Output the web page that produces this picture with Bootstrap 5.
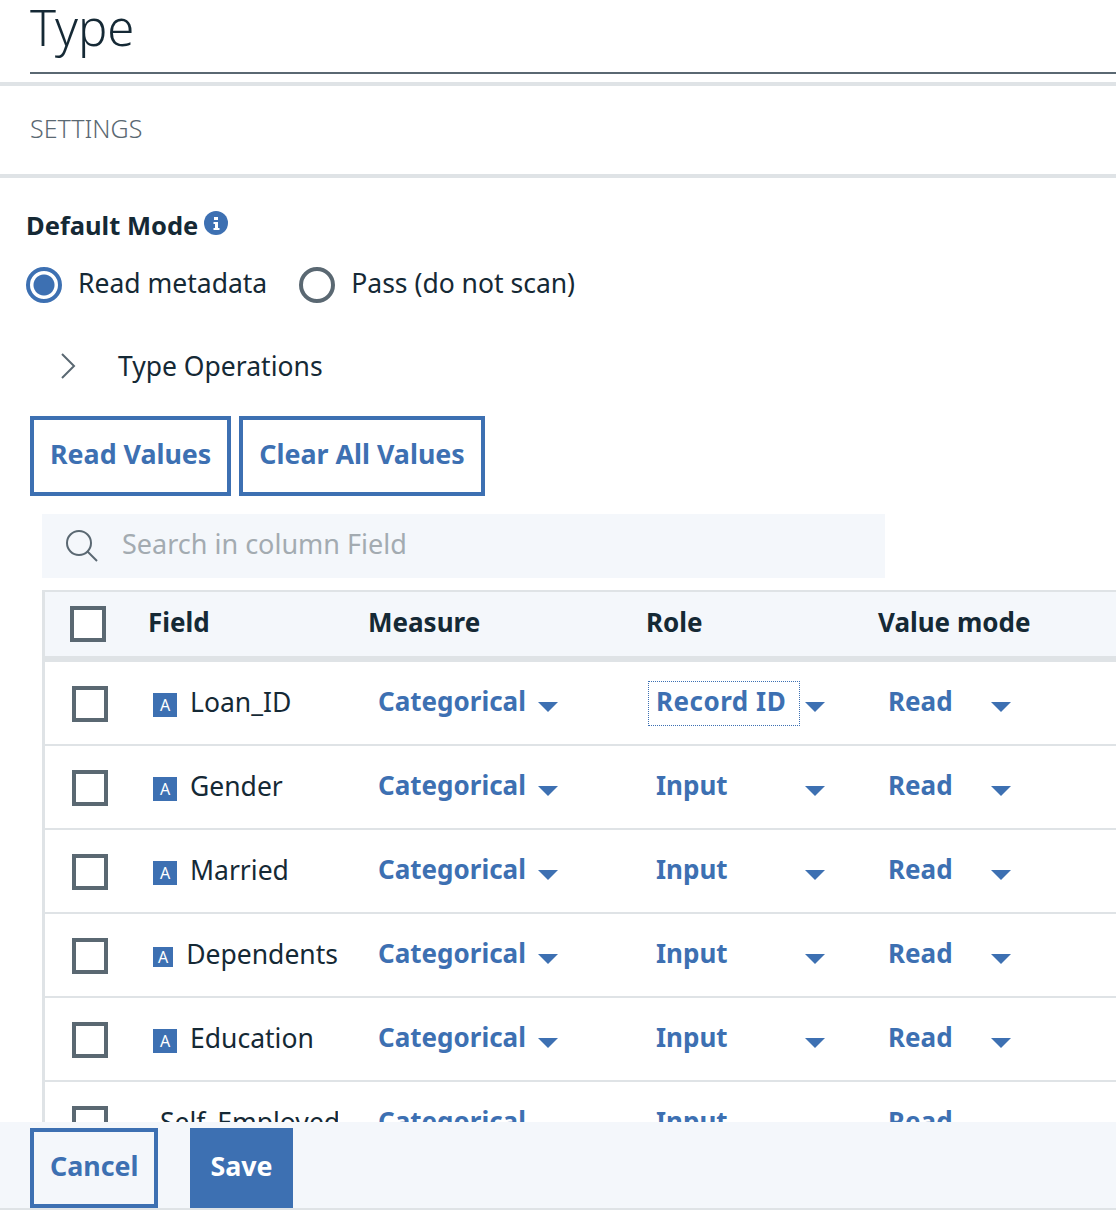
<!DOCTYPE html>
<html lang="en">
<head>
    <title>Type</title>
    <meta charset="UTF-8">
    <meta name="viewport" content="width=device-width, initial-scale=1.0">
    <link href="https://cdn.jsdelivr.net/npm/bootstrap@5.3.0/dist/css/bootstrap.min.css" rel="stylesheet">
    <style>
        html, body { height: 100%; }
        body {
            font-family: "Noto Sans", "Liberation Sans", sans-serif;
            color: #152935;
            overflow: hidden;
            display: flex;
            flex-direction: column;
        }

        .page-title {
            margin: 0 0 8px 30px;
            height: 74px;
            font-size: 49px;
            font-weight: 300;
            line-height: 54px;
            border-bottom: 2px solid #5a6872;
        }

        .settings-bar {
            height: 96px;
            padding-left: 30px;
            border-top: 4px solid #dfe3e6;
            border-bottom: 4px solid #dfe3e6;
            font-size: 25px;
            font-weight: 300;
            line-height: 84px;
            color: #5a6872;
            text-transform: uppercase;
        }

        .scroll-area { flex: 1 1 0; min-height: 0; overflow: hidden; }

        .mode-label { margin: 29px 0 0 26px; font-size: 25.500px; font-weight: 700; line-height: 36px; }
        .info-dot { width: 24px; height: 24px; vertical-align: 0; margin-left: -1px; }

        .mode-radios { margin: 22px 0 0 26px; gap: 32px; font-size: 26.500px; line-height: 36px; }
        .mode-radios label { display: flex; align-items: center; gap: 16px; }
        .mode-radios span { padding-bottom: 4px; }
        .mode-radio {
            appearance: none;
            width: 36px;
            height: 36px;
            margin: 0;
            border: 4px solid #5a6872;
            border-radius: 50%;
            background: #fff;
        }
        .mode-radio:checked {
            border-color: #3d70b2;
            background: radial-gradient(circle, #3d70b2 0 10px, #fff 11px);
        }

        .ops-row { margin: 43px 0 0 60px; gap: 42px; font-size: 26.500px; line-height: 36px; }

        .action-row { margin: 32px 0 0 30px; gap: 8px; }
        .ibm-btn {
            height: 80px;
            padding: 0 16px 4px;
            border: 4px solid #3d70b2;
            border-radius: 0;
            color: #3d70b2;
            background: transparent;
            font-size: 26.800px;
            font-weight: 700;
        }
        .ibm-btn-solid { background: #3d70b2; color: #fff; }

        .search-box {
            width: 843px;
            height: 64px;
            margin: 18px 0 0 42px;
            padding: 0 0 0 24px;
            gap: 22px;
            background: #f4f7fb;
        }
        .search-box input {
            border: 0;
            outline: 0;
            flex: 1;
            padding-bottom: 4px;
            background: transparent;
            font-size: 27px;
            color: #152935;
        }
        .search-box input::placeholder { color: #a3abb1; }

        .field-table {
            width: 1180px;
            margin: 12px 0 0 42px;
            table-layout: fixed;
            border-collapse: separate;
            border-spacing: 0;
            border-top: 2px solid #dfe3e6;
            border-left: 3px solid #dfe3e6;
            font-size: 26.500px;
        }
        .field-table th {
            height: 70px;
            padding: 0 0 5px;
            background: #f4f7fb;
            border-bottom: 6px solid #dfe3e6;
            font-size: 26px;
            font-weight: 700;
            line-height: 36px;
        }
        .field-table td {
            height: 84px;
            padding: 0;
            border-bottom: 2px solid #dfe3e6;
            vertical-align: middle;
        }

        .row-check {
            appearance: none;
            display: block;
            width: 36px;
            height: 36px;
            margin: 0;
            border: 4px solid #5a6872;
            background: #fff;
        }
        .col-check { width: 103px; }
        .col-field { width: 220px; }
        .col-measure { width: 278px; }
        .col-role { width: 232px; }
        th.col-check .row-check { margin: 4px 0 0 25px; }
        td .row-check { margin: 2px 0 0 27px; }

        .field-cell { width: 185px; gap: 13px; margin-left: 5px; white-space: nowrap; overflow: hidden; }
        .field-cell.long-name { gap: 7px; }
        .type-mark {
            display: flex;
            align-items: center;
            justify-content: center;
            flex: 0 1 24px;
            margin-top: 4px;
            aspect-ratio: 1;
            background: #3d70b2;
            color: #fff;
            font-size: 16px;
            line-height: 1;
            overflow: hidden;
        }
        .pick {
            display: flex;
            align-items: center;
            color: #3d70b2;
            font-size: 26px;
            line-height: 36px;
        }
        .pick b { font-weight: 700; padding-bottom: 4px; }
        .pick-caret {
            width: 0;
            height: 0;
            margin-top: 8px;
            border-left: 10px solid transparent;
            border-right: 10px solid transparent;
            border-top: 10px solid #3d70b2;
        }
        .pick-measure { margin-left: 10px; gap: 12px; }
        .pick-role { margin-left: 2px; }
        .pick-role b {
            width: 152px;
            height: 45px;
            padding: 0 0 0 7px;
            line-height: 39px;
            border: 1px solid transparent;
        }
        .pick-role b.is-focus { border: 1px dotted #3d70b2; letter-spacing: .5px; }
        .pick-role .pick-caret { margin-left: 5px; }
        .pick-read { margin-left: 10px; }
        .pick-read b { width: 103px; }

        .bottom-bar {
            height: 88px;
            padding: 6px 0 0 30px;
            gap: 32px;
            flex: none;
            background: #f4f7fb;
            border-bottom: 2px solid #dfe3e6;
        }
    </style>
</head>

<body>
    <h1 class="page-title">Type</h1>
    <div class="settings-bar">Settings</div>

    <div class="scroll-area">
        <div class="mode-label">Default Mode
            <svg class="info-dot" viewBox="0 0 24 24"><circle cx="12" cy="12" r="12" fill="#3d70b2"/><path d="M10 6h4v3h-4zM9.500 11h4.500v6h1.500v2h-6v-2h1.500v-4h-1.500z" fill="#fff"/></svg>
        </div>
        <div class="mode-radios d-flex">
            <label><input class="mode-radio" type="radio" name="mode" checked><span>Read metadata</span></label>
            <label><input class="mode-radio" type="radio" name="mode"><span>Pass (do not scan)</span></label>
        </div>
        <div class="ops-row d-flex align-items-center">
            <svg width="16" height="26" viewBox="0 0 16 26"><path d="M2 1l12 12L2 25" fill="none" stroke="#5a6872" stroke-width="2"/></svg>
            <span>Type Operations</span>
        </div>
        <div class="action-row d-flex">
            <button class="btn ibm-btn" type="button">Read Values</button>
            <button class="btn ibm-btn" type="button">Clear All Values</button>
        </div>
        <div class="search-box d-flex align-items-center">
            <svg width="32" height="32" viewBox="0 0 32 32"><circle cx="13" cy="13" r="12" fill="none" stroke="#5a6872" stroke-width="2"/><path d="M21.500 21.500L31 31" stroke="#5a6872" stroke-width="2"/></svg>
            <input type="text" placeholder="Search in column Field">
        </div>

        <table class="field-table">
            <thead>
                <tr>
                    <th class="col-check"><input class="row-check" type="checkbox"></th>
                    <th class="col-field">Field</th>
                    <th class="col-measure">Measure</th>
                    <th class="col-role">Role</th>
                    <th>Value mode</th>
                </tr>
            </thead>
            <tbody id="rows"></tbody>
        </table>
    </div>

    <div class="bottom-bar d-flex">
        <button class="btn ibm-btn" type="button">Cancel</button>
        <button class="btn ibm-btn ibm-btn-solid" type="button">Save</button>
    </div>

    <script src="https://cdn.jsdelivr.net/npm/bootstrap@5.3.0/dist/js/bootstrap.bundle.min.js"></script>
    <script>
        const fields = ['Loan_ID', 'Gender', 'Married', 'Dependents', 'Education', 'Self_Employed'];
        const tbody = document.getElementById('rows');

        fields.forEach(function (name, i) {
            const role = i === 0 ? 'Record ID' : 'Input';
            const cellClass = name.length > 10 ? 'long-name' : '';
            tbody.insertAdjacentHTML('beforeend', `
                <tr>
                    <td><input class="row-check" type="checkbox"></td>
                    <td><div class="field-cell d-flex align-items-center ${cellClass}"><span class="type-mark">A</span><span>${name}</span></div></td>
                    <td><div class="pick pick-measure"><b>Categorical</b><span class="pick-caret"></span></div></td>
                    <td><div class="pick pick-role"><b class="${i === 0 ? 'is-focus' : ''}">${role}</b><span class="pick-caret"></span></div></td>
                    <td><div class="pick pick-read"><b>Read</b><span class="pick-caret"></span></div></td>
                </tr>`);
        });
    </script>
</body>
</html>
